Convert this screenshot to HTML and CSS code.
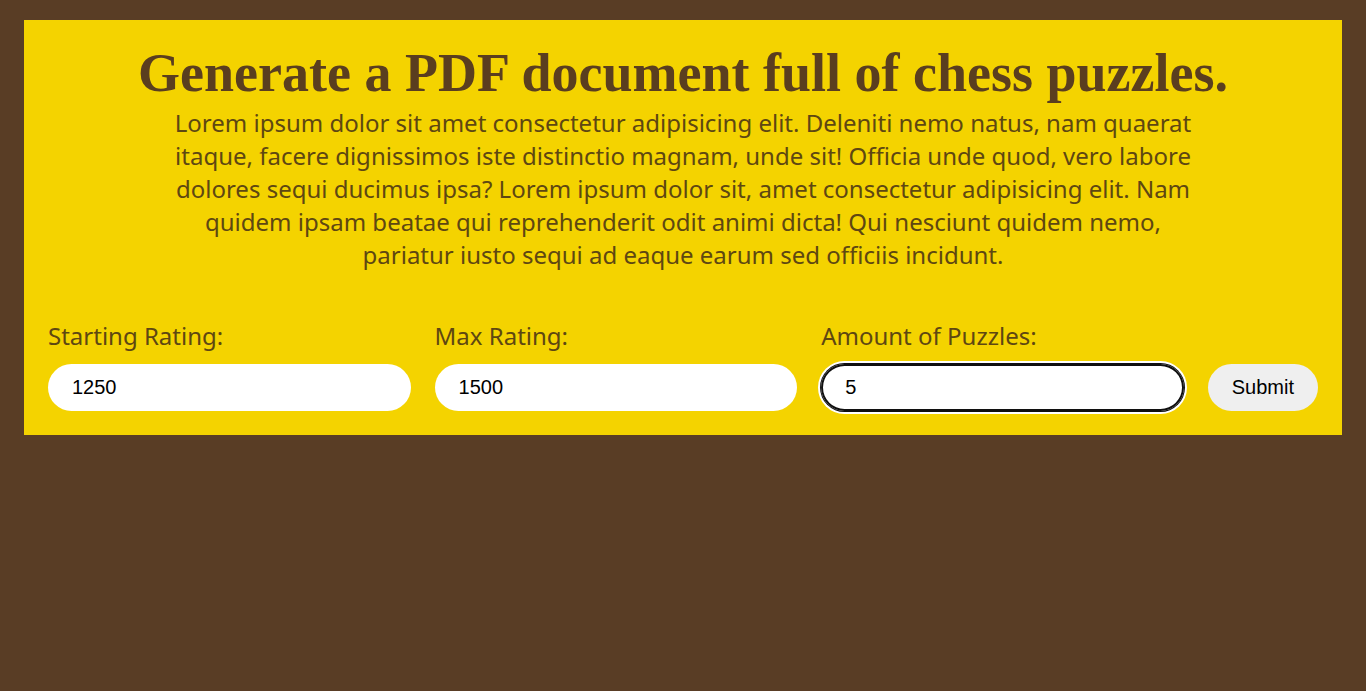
FILE: index.html
```html
<!DOCTYPE html>
<html lang="en">
<head>
<meta charset="utf-8">
<title>Chess Puzzles PDF</title>
<link rel="stylesheet" href="styles.css">
</head>
<body>
<main class="card">
  <h1 class="title">Generate a PDF document full of chess puzzles.</h1>
  <p class="intro">Lorem ipsum dolor sit amet consectetur adipisicing elit. Deleniti nemo natus, nam quaerat itaque, facere dignissimos iste distinctio magnam, unde sit! Officia unde quod, vero labore dolores sequi ducimus ipsa? Lorem ipsum dolor sit, amet consectetur adipisicing elit. Nam quidem ipsam beatae qui reprehenderit odit animi dicta! Qui nesciunt quidem nemo, pariatur iusto sequi ad eaque earum sed officiis incidunt.</p>
  <form class="form">
    <div class="field">
      <label class="label" for="start">Starting Rating:</label>
      <input class="input" id="start" type="text" value="1250">
    </div>
    <div class="field">
      <label class="label" for="max">Max Rating:</label>
      <input class="input" id="max" type="text" value="1500">
    </div>
    <div class="field">
      <label class="label" for="amount">Amount of Puzzles:</label>
      <input class="input input-focused" id="amount" type="text" value="5">
    </div>
    <button class="submit" type="button">Submit</button>
  </form>
</main>
</body>
</html>
```

FILE: styles.css
```css
html, body {
  margin: 0;
  padding: 0;
}
body {
  background: #593d25;
  padding: 20px 24px;
  font-family: "Noto Sans", "Open Sans", sans-serif;
}
.card {
  background: #f4d300;
  padding: 20px 24px 24px;
  display: flex;
  flex-direction: column;
  align-items: center;
}
.title {
  margin: 0;
  font-family: "Liberation Serif", "DejaVu Serif", serif;
  font-weight: bold;
  font-size: 54px;
  line-height: 66px;
  color: #5a3e1f;
  text-align: center;
}
.intro {
  margin: 0;
  max-width: 1040px;
  font-size: 24px;
  line-height: 33px;
  color: #5e4712;
  text-align: center;
}
.form {
  align-self: stretch;
  display: flex;
  align-items: flex-end;
  gap: 24px;
  margin-top: 48px;
}
.field {
  flex: 1;
  display: flex;
  flex-direction: column;
  gap: 12px;
}
.label {
  font-size: 24px;
  line-height: 33px;
  color: #5e4712;
}
.input {
  box-sizing: border-box;
  height: 47px;
  width: 100%;
  border: none;
  border-radius: 24px;
  background: #fff;
  padding: 0 24px;
  font-family: "Liberation Sans", Arial, sans-serif;
  font-size: 20px;
  color: #000;
  outline: none;
}
.input-focused {
  box-shadow: inset 0 0 0 2px #101010, 0 0 0 1px #101010, 0 0 0 3px #fff;
}
.submit {
  height: 47px;
  padding: 0 24px;
  border: none;
  border-radius: 24px;
  background: #efefef;
  font-family: "Liberation Sans", Arial, sans-serif;
  font-size: 20px;
  color: #000;
}
```
